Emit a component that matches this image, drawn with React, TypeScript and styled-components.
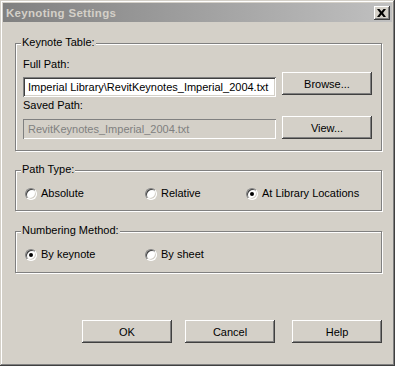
import styled, { createGlobalStyle } from 'styled-components';

const GlobalStyle = createGlobalStyle`
  html, body {
    margin: 0;
    padding: 0;
    background: #d4d0c8;
  }
  body {
    font-family: "Liberation Sans", Arial, sans-serif;
    font-size: 11px;
    color: #000;
  }
`;

const Window = styled.div`
  width: 395px;
  height: 366px;
  box-sizing: border-box;
  padding: 3px;
  background: #d4d0c8;
  box-shadow:
    inset -1px -1px 0 #404040,
    inset 1px 1px 0 #d4d0c8,
    inset -2px -2px 0 #808080,
    inset 2px 2px 0 #fff;
  display: flex;
  flex-direction: column;
`;

const TitleBar = styled.div`
  height: 19px;
  display: flex;
  align-items: center;
  justify-content: space-between;
  padding: 0 2px 0 3px;
  background: linear-gradient(to right, #808080, #c0c0c0);
`;

const Title = styled.span`
  font-weight: bold;
  font-size: 11.5px;
  letter-spacing: 0.3px;
  color: #d4d0c8;
`;

const CloseButton = styled.div`
  width: 16px;
  height: 14px;
  box-sizing: border-box;
  background: #d4d0c8;
  box-shadow:
    inset -1px -1px 0 #404040,
    inset 1px 1px 0 #fff,
    inset -2px -2px 0 #808080;
  display: flex;
  align-items: center;
  justify-content: center;
  padding-right: 1px;
`;

const Content = styled.div`
  padding: 21px 10px 0 12px;
  display: flex;
  flex-direction: column;
`;

const Group = styled.div<{ $mt?: number; $pt: number; $pb: number; $pl: number }>`
  position: relative;
  margin-top: ${p => p.$mt ?? 0}px;
  padding: ${p => p.$pt}px 9px ${p => p.$pb}px ${p => p.$pl}px;
  border: 1px solid #808080;
  box-shadow: inset 1px 1px 0 #fff, 1px 1px 0 #fff;
`;

const Legend = styled.span`
  position: absolute;
  top: -8px;
  left: 5px;
  padding: 0 1px;
  line-height: 13px;
  background: #d4d0c8;
`;

const PathRow = styled.div<{ $mt?: number }>`
  display: flex;
  align-items: flex-end;
  gap: 6px;
  margin-top: ${p => p.$mt ?? 0}px;
`;

const Field = styled.div`
  display: flex;
  flex-direction: column;
`;

const FieldLabel = styled.div<{ $gap: number }>`
  line-height: 13px;
  margin-bottom: ${p => p.$gap}px;
`;

const TextBox = styled.input<{ $disabled?: boolean }>`
  width: 253px;
  height: 20px;
  box-sizing: border-box;
  border: none;
  outline: none;
  margin: 0;
  padding: 0 3px 0 5px;
  font-family: "Liberation Sans", Arial, sans-serif;
  font-size: 11px;
  background: ${p => (p.$disabled ? '#d4d0c8' : '#fff')};
  color: ${p => (p.$disabled ? '#808080' : '#000')};
  box-shadow:
    inset 1px 1px 0 #808080,
    inset -1px -1px 0 #fff,
    inset 2px 2px 0 ${p => (p.$disabled ? '#d4d0c8' : '#404040')},
    inset -2px -2px 0 #d4d0c8;
`;

const Button = styled.button<{ $mb?: number; $mr?: number }>`
  width: 90px;
  height: 23px;
  margin: 0 ${p => p.$mr ?? 0}px ${p => p.$mb ?? 0}px 0;
  padding: 0;
  border: none;
  background: #d4d0c8;
  font-family: "Liberation Sans", Arial, sans-serif;
  font-size: 11px;
  color: #000;
  flex-shrink: 0;
  box-shadow:
    inset -1px -1px 0 #404040,
    inset 1px 1px 0 #fff,
    inset -2px -2px 0 #808080;
`;

const RadioRow = styled.div`
  display: flex;
  align-items: center;
`;

const RadioItem = styled.label<{ $width?: number }>`
  display: flex;
  align-items: center;
  gap: 4px;
  width: ${p => (p.$width ? `${p.$width}px` : 'auto')};
  line-height: 13px;
`;

const RadioCircle = styled.span<{ $checked?: boolean }>`
  position: relative;
  width: 12px;
  height: 12px;
  box-sizing: border-box;
  border-radius: 50%;
  border: 1px solid;
  border-color: #808080 #fff #fff #808080;
  box-shadow: inset 1px 1px 0 #404040, inset -1px -1px 0 #d4d0c8;
  background: #fff;

  &::after {
    content: '';
    display: ${p => (p.$checked ? 'block' : 'none')};
    position: absolute;
    left: 3px;
    top: 3px;
    width: 4px;
    height: 4px;
    border-radius: 50%;
    background: #000;
  }
`;

const ButtonRow = styled.div`
  display: flex;
  justify-content: flex-end;
  margin-top: 47px;
`;

const Radio = ({ label, checked, width }: { label: string; checked?: boolean; width?: number }) => (
  <RadioItem $width={width}>
    <RadioCircle $checked={checked} />
    <span>{label}</span>
  </RadioItem>
);

export default function App() {
  return (
    <>
      <GlobalStyle />
      <Window>
        <TitleBar>
          <Title>Keynoting Settings</Title>
          <CloseButton>
            <svg width="9" height="8" viewBox="0 0 9 8">
              <path d="M0 0h2.5l2 2.5 2-2.5H9L6 4l3 4H6.5l-2-2.5-2 2.5H0l3-4z" fill="#000" />
            </svg>
          </CloseButton>
        </TitleBar>
        <Content>
          <Group $pt={14} $pb={11} $pl={7}>
            <Legend>Keynote Table:</Legend>
            <PathRow>
              <Field>
                <FieldLabel $gap={6}>Full Path:</FieldLabel>
                <TextBox readOnly value="Imperial Library\RevitKeynotes_Imperial_2004.txt" />
              </Field>
              <Button $mb={2}>Browse...</Button>
            </PathRow>
            <PathRow $mt={2}>
              <Field>
                <FieldLabel $gap={7}>Saved Path:</FieldLabel>
                <TextBox $disabled readOnly value="RevitKeynotes_Imperial_2004.txt" />
              </Field>
              <Button>View...</Button>
            </PathRow>
          </Group>

          <Group $mt={19} $pt={16} $pb={10} $pl={9}>
            <Legend>Path Type:</Legend>
            <RadioRow>
              <Radio label="Absolute" width={120} />
              <Radio label="Relative" width={101} />
              <Radio label="At Library Locations" checked />
            </RadioRow>
          </Group>

          <Group $mt={20} $pt={16} $pb={11} $pl={9}>
            <Legend>Numbering Method:</Legend>
            <RadioRow>
              <Radio label="By keynote" checked width={120} />
              <Radio label="By sheet" />
            </RadioRow>
          </Group>

          <ButtonRow>
            <Button $mr={13}>OK</Button>
            <Button $mr={17}>Cancel</Button>
            <Button>Help</Button>
          </ButtonRow>
        </Content>
      </Window>
    </>
  );
}
